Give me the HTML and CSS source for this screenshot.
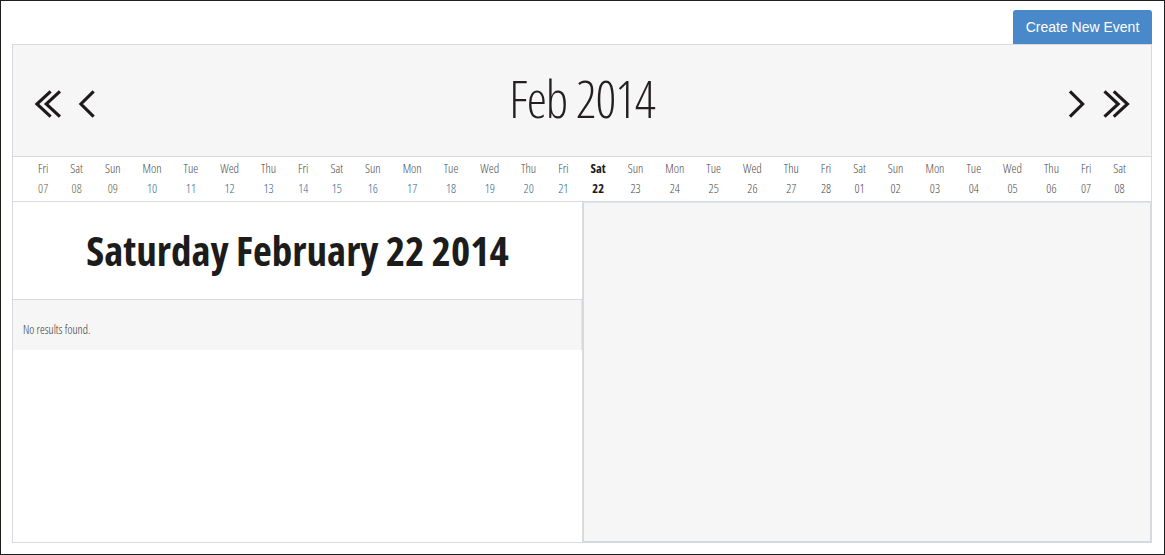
FILE: index.html
```html
<!DOCTYPE html>
<html>
<head>
<meta charset="utf-8">
<link rel="stylesheet" href="styles.css">
</head>
<body>
<div class="page">
  <div class="toolbar">
    <button class="btn-create">Create New Event</button>
  </div>
  <div class="calendar">
    <div class="cal-header">
      <div class="nav-group">
        <svg class="ic-dbl" width="28" height="30" viewBox="0 0 28 30"><polyline points="17,2 3,15 17,28"/><polyline points="26.5,2 12.5,15 26.5,28"/></svg>
        <svg class="ic-sgl" width="18" height="30" viewBox="0 0 18 30"><polyline points="16,2 3,15 16,28"/></svg>
      </div>
      <div class="month-title">Feb 2014</div>
      <div class="nav-group">
        <svg class="ic-sgl" width="18" height="30" viewBox="0 0 18 30"><polyline points="2,2 15,15 2,28"/></svg>
        <svg class="ic-dbl" width="28" height="30" viewBox="0 0 28 30"><polyline points="1.5,2 15.5,15 1.5,28"/><polyline points="11,2 25,15 11,28"/></svg>
      </div>
    </div>
    <div class="day-strip">
      <div class="day early"><span class="dn">Fri</span><span class="dd">07</span></div>
      <div class="day early"><span class="dn">Sat</span><span class="dd">08</span></div>
      <div class="day early"><span class="dn">Sun</span><span class="dd">09</span></div>
      <div class="day mid"><span class="dn">Mon</span><span class="dd">10</span></div>
      <div class="day mid"><span class="dn">Tue</span><span class="dd">11</span></div>
      <div class="day mid"><span class="dn">Wed</span><span class="dd">12</span></div>
      <div class="day mid"><span class="dn">Thu</span><span class="dd">13</span></div>
      <div class="day mid"><span class="dn">Fri</span><span class="dd">14</span></div>
      <div class="day mid"><span class="dn">Sat</span><span class="dd">15</span></div>
      <div class="day mid"><span class="dn">Sun</span><span class="dd">16</span></div>
      <div class="day mid"><span class="dn">Mon</span><span class="dd">17</span></div>
      <div class="day mid"><span class="dn">Tue</span><span class="dd">18</span></div>
      <div class="day mid"><span class="dn">Wed</span><span class="dd">19</span></div>
      <div class="day mid"><span class="dn">Thu</span><span class="dd">20</span></div>
      <div class="day mid"><span class="dn">Fri</span><span class="dd">21</span></div>
      <div class="day today"><span class="dn">Sat</span><span class="dd">22</span></div>
      <div class="day"><span class="dn">Sun</span><span class="dd">23</span></div>
      <div class="day"><span class="dn">Mon</span><span class="dd">24</span></div>
      <div class="day"><span class="dn">Tue</span><span class="dd">25</span></div>
      <div class="day"><span class="dn">Wed</span><span class="dd">26</span></div>
      <div class="day"><span class="dn">Thu</span><span class="dd">27</span></div>
      <div class="day"><span class="dn">Fri</span><span class="dd">28</span></div>
      <div class="day"><span class="dn">Sat</span><span class="dd">01</span></div>
      <div class="day"><span class="dn">Sun</span><span class="dd">02</span></div>
      <div class="day"><span class="dn">Mon</span><span class="dd">03</span></div>
      <div class="day"><span class="dn">Tue</span><span class="dd">04</span></div>
      <div class="day"><span class="dn">Wed</span><span class="dd">05</span></div>
      <div class="day"><span class="dn">Thu</span><span class="dd">06</span></div>
      <div class="day"><span class="dn">Fri</span><span class="dd">07</span></div>
      <div class="day"><span class="dn">Sat</span><span class="dd">08</span></div>
    </div>
    <div class="cal-body">
      <div class="left-pane">
        <div class="date-title">Saturday February 22 2014</div>
        <div class="results">No results found.</div>
      </div>
      <div class="right-pane"></div>
    </div>
  </div>
</div>
</body>
</html>
```

FILE: styles.css
```css
html, body {
  margin: 0;
  padding: 0;
}
body {
  width: 1165px;
  height: 555px;
  box-sizing: border-box;
  border: 1px solid #1e1e1e;
  background: #fff;
  font-family: "Open Sans", "DejaVu Sans", sans-serif;
  font-stretch: 75%;
  color: #333;
}
.page {
  height: 100%;
  box-sizing: border-box;
  padding: 9px 12px 11px 11px;
  display: flex;
  flex-direction: column;
}
.toolbar {
  display: flex;
  justify-content: flex-end;
}
.btn-create {
  width: 139px;
  height: 34px;
  border: none;
  border-radius: 3px 3px 0 0;
  background: #4a89c9;
  color: #fff;
  font-family: "Liberation Sans", Arial, sans-serif;
  font-size: 14px;
  padding: 0;
}
.calendar {
  flex: 1;
  border: 1px solid #d6dade;
  display: flex;
  flex-direction: column;
  min-height: 0;
}
.cal-header {
  height: 111px;
  flex: none;
  background: #f6f6f6;
  border-bottom: 1px solid #d6dade;
  display: flex;
  align-items: center;
  justify-content: space-between;
  padding: 0 21px;
}
.nav-group {
  display: flex;
  align-items: center;
  gap: 17px;
  padding-top: 6px;
  width: 62px;
}
.nav-group:last-child {
  justify-content: flex-end;
}
.nav-group svg {
  fill: none;
  stroke: #1f1a1a;
  stroke-width: 3.2;
  stroke-linejoin: miter;
  display: block;
}
.month-title {
  font-size: 51px;
  font-weight: 300;
  letter-spacing: -1px;
  color: #231f1f;
  line-height: 1;
  padding-bottom: 4px;
}
.day-strip {
  height: 45px;
  flex: none;
  box-sizing: border-box;
  border-bottom: 1px solid #d6dade;
  display: flex;
  justify-content: space-evenly;
  align-items: flex-start;
  padding: 2px 3px 0;
  background: #fff;
}
.day {
  display: flex;
  flex-direction: column;
  align-items: center;
  font-size: 12.5px;
  font-weight: 300;
  line-height: 20px;
  color: #4a4a4a;
}
.day .dd {
  color: #4a4a4a;
}
.day.early .dd {
  color: #6e6238;
}
.day.mid .dd {
  color: #356595;
}
.day.today {
  font-weight: 700;
  color: #1a1a1a;
}
.day.today .dd {
  color: #1a1a1a;
}
.cal-body {
  flex: 1;
  display: flex;
  min-height: 0;
}
.left-pane {
  width: 569px;
  display: flex;
  flex-direction: column;
}
.date-title {
  height: 98px;
  border-bottom: 1px solid #d6dade;
  display: flex;
  align-items: center;
  justify-content: center;
  font-size: 41px;
  font-weight: 700;
  color: #1c1c1c;
  padding-bottom: 2px;
  box-sizing: border-box;
}
.results {
  height: 50px;
  background: #f6f6f6;
  border-right: 1px solid #e4e6e8;
  box-sizing: border-box;
  padding: 21px 10px 0;
  font-size: 12px;
  font-weight: 300;
  color: #333;
}
.right-pane {
  flex: 1;
  background: #f6f6f6;
  border: 1px solid #d6dade;
  border-left-width: 2px;
  border-top-color: #e2e5e8;
}
```
